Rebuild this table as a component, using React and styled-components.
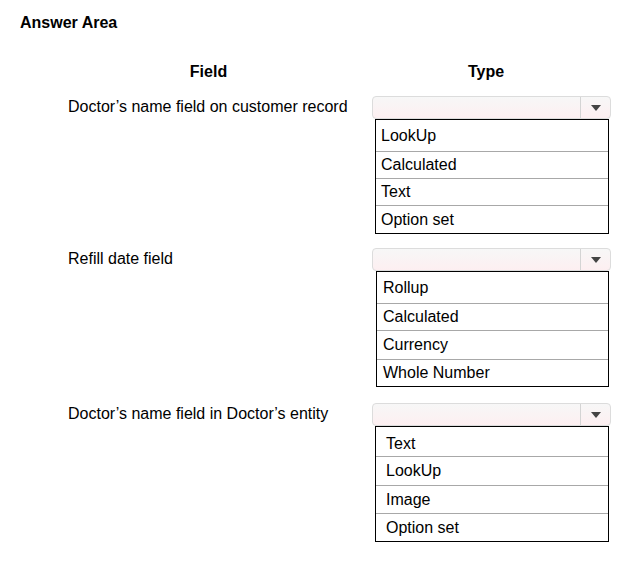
import React from 'react';
import styled, { createGlobalStyle } from 'styled-components';

const GlobalStyle = createGlobalStyle`
  body {
    margin: 0;
    background: #fff;
    font-family: "Liberation Sans", Arial, sans-serif;
    color: #000;
  }
`;

const Page = styled.div`
  width: 641px;
  height: 570px;
  padding-top: 13px;
  box-sizing: border-box;
`;

const Title = styled.h1`
  margin: 0 0 0 20px;
  font-size: 16px;
  font-weight: bold;
  line-height: 20px;
`;

const Grid = styled.div`
  display: grid;
  grid-template-columns: 313px 250px;
  margin-left: 48px;
  margin-top: 29px;
`;

const HeadCell = styled.div`
  text-align: center;
  font-size: 16px;
  font-weight: bold;
  line-height: 20px;
  padding-left: ${(p) => p.pl || 0}px;
  margin-bottom: 14px;
`;

const Label = styled.div`
  padding-left: 20px;
  font-size: 16px;
  line-height: 22px;
  margin-top: ${(p) => p.mt || 0}px;
`;

const Block = styled.div`
  margin-top: ${(p) => p.mt || 0}px;
  display: flex;
  flex-direction: column;
`;

const Select = styled.div`
  margin-left: 11px;
  width: 239px;
  height: 23px;
  box-sizing: border-box;
  border: 1px solid #dcdcdc;
  border-radius: 4px;
  background: linear-gradient(#f7f7f7, #fdeff1);
  display: flex;
  justify-content: flex-end;
`;

const Arrow = styled.div`
  width: 29px;
  border-left: 1px solid #d4d4d4;
  display: flex;
  align-items: center;
  justify-content: center;

  &::after {
    content: '';
    border-left: 5px solid transparent;
    border-right: 5px solid transparent;
    border-top: 6px solid #444;
  }
`;

const List = styled.ul`
  list-style: none;
  margin: 0 0 0 ${(p) => p.ml}px;
  padding: 0;
  width: ${(p) => 234 - (p.ml - 14)}px;
  box-sizing: border-box;
  border: 1px solid #000;
`;

const Item = styled.li`
  height: ${(p) => p.h}px;
  box-sizing: border-box;
  padding-left: ${(p) => p.pad}px;
  padding-top: ${(p) => p.pt || 0}px;
  display: flex;
  align-items: center;
  font-size: 16px;
  border-top: ${(p) => (p.first ? 'none' : '1px solid #a8a8a8')};
`;

const groups = [
  {
    label: 'Doctor’s name field on customer record',
    mt: 0,
    ml: 14,
    pad: 5,
    pt: 1,
    items: [
      ['LookUp', 31],
      ['Calculated', 27],
      ['Text', 27],
      ['Option set', 28],
    ],
  },
  {
    label: 'Refill date field',
    mt: 14,
    ml: 15,
    pad: 6,
    pt: 1,
    items: [
      ['Rollup', 31],
      ['Calculated', 27],
      ['Currency', 29],
      ['Whole Number', 27],
    ],
  },
  {
    label: 'Doctor’s name field in Doctor’s entity',
    mt: 16,
    ml: 14,
    pad: 10,
    pt: 4,
    items: [
      ['Text', 29],
      ['LookUp', 29],
      ['Image', 28],
      ['Option set', 28],
    ],
  },
];

const App = () => {
  return (
    <Page>
      <GlobalStyle />
      <Title>Answer Area</Title>
      <Grid>
        <HeadCell pl={8}>Field</HeadCell>
        <HeadCell>Type</HeadCell>
        {groups.map((g, i) => (
          <React.Fragment key={i}>
            <Label mt={g.mt}>{g.label}</Label>
            <Block mt={g.mt}>
              <Select>
                <Arrow />
              </Select>
              <List ml={g.ml}>
                {g.items.map(([text, h], j) => (
                  <Item
                    key={j}
                    h={h}
                    pad={g.pad}
                    pt={j === 0 ? g.pt : 0}
                    first={j === 0}
                  >
                    {text}
                  </Item>
                ))}
              </List>
            </Block>
          </React.Fragment>
        ))}
      </Grid>
    </Page>
  );
};

export default App;
